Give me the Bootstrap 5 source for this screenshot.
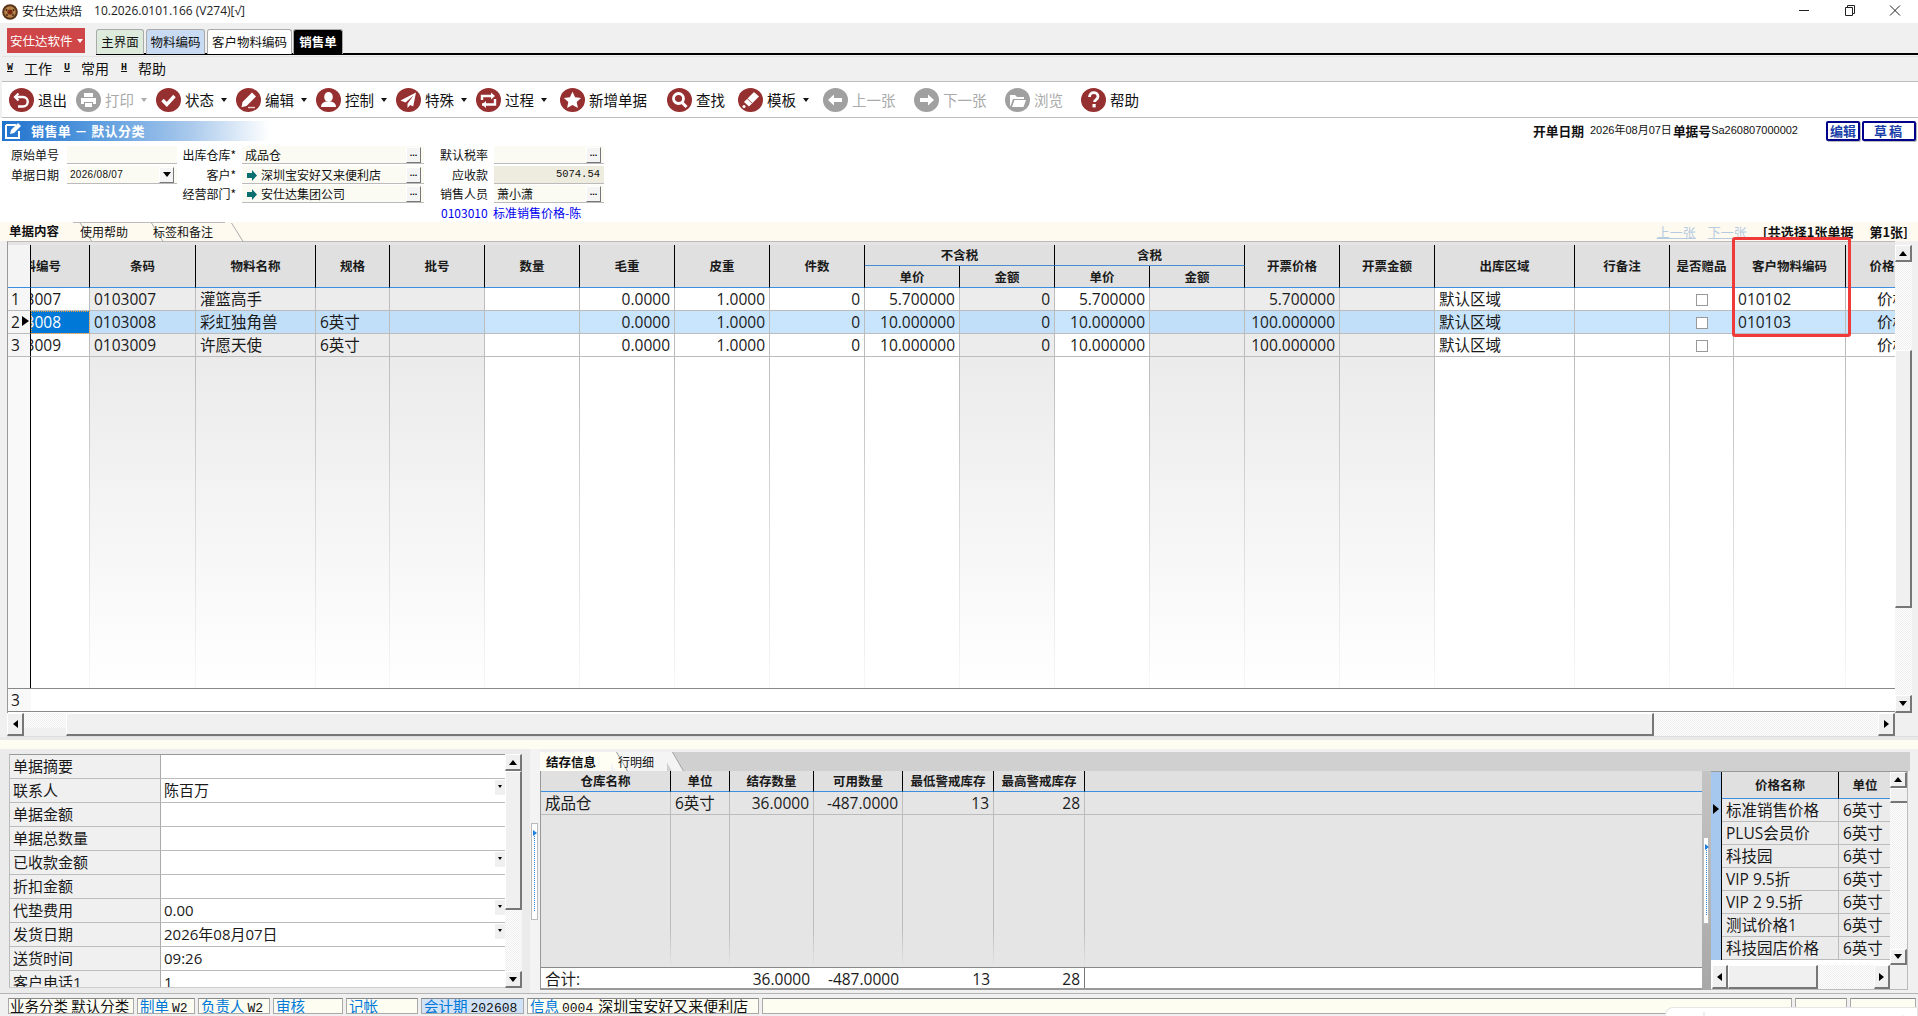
<!DOCTYPE html>
<html lang="zh-CN">
<head>
<meta charset="utf-8">
<title>安仕达烘焙</title>
<link href="https://cdn.jsdelivr.net/npm/bootstrap@5.3.0/dist/css/bootstrap.min.css" rel="stylesheet">
<style>
html,body{height:100%;overflow:hidden}
body{font-family:"Noto Sans CJK SC","Liberation Sans",sans-serif;font-size:12px;color:#111;background:#f0f0f0;line-height:1.2}
.app{position:relative;width:1918px;height:1016px;overflow:hidden}
.titlebar{height:23px;background:#fff;padding-left:2px}
.titlebar .ttl{margin-left:4px;font-size:12px}
.titlebar .ver{margin-left:12px;font-family:"Open Sans","Noto Sans CJK SC",sans-serif;font-size:12px;color:#222}
.winbtns{margin-left:auto}
.winpad{width:3px}
.tabbar{height:33px;background:#f0f0f0;padding:5px 0 0 7px}
.redbtn{width:78px;height:25px;background:#cf4648;color:#fff;font-size:12.5px;padding-left:3px}
.caret-s{width:0;height:0;border:3px solid transparent;border-top:4px solid currentColor;border-bottom:0;display:inline-block}
.doctabs{margin-left:11px;height:27px;border-bottom:2px solid #000;align-self:flex-start;flex:1;gap:2px;padding-top:1px}
.doctab{height:25px;border:1px solid #aaa;border-bottom:0;border-radius:3px 3px 0 0;font-size:12.5px;line-height:23px;text-align:center}
.dt1{width:48px;background:#dcebdc}.dt2{width:59px;background:#c8dbf2}.dt3{width:85px;background:#fff}
.dt4{width:50px;background:#000;color:#fff;font-weight:700;margin-left:-1px}
.menubar{height:26px;background:#f0f0f0;border-top:1px solid #e2e2e2;border-bottom:1px solid #bdbdbd;padding:0 0 2px 5px;font-size:14px;margin-left:2px}
.menubar u{font-family:"Liberation Mono",monospace;font-size:10px;font-weight:700;margin-right:11px;text-decoration:underline}
.menubar .mi{margin-right:12px}
.toolbar{height:36px;background:#fff;border-bottom:1px solid #bdbdbd;padding-left:7px;margin-left:2px}
.tbi{display:flex;align-items:center;flex:none;font-size:14.5px}
.tbi svg{flex:none;margin-right:4px;color:#962f2f}
.tbi.off{color:#aaa}.tbi.off svg{color:#a0a0a0}
.tbi .caret-s{margin-left:7px}
.tbi.off .caret-s{color:#aaa}
.w67{width:67px}.w80{width:80px}.w107{width:107px}.w71{width:71px}.w85{width:85px}.w91{width:91px}.w76{width:76px}
.capline{height:28px;background:#fff;padding:3px 2px 0 2px}
.cap{width:268px;height:20px;background:linear-gradient(90deg,#2273ce 0,#4e94dc 30%,#a9c9ec 70%,#fff 100%);color:#fff;font-weight:700;font-size:13px;padding-left:2px}
.cap span{margin-left:7px;letter-spacing:.4px}
.metainfo{margin-left:auto;font-size:12.75px;height:19px}
.metainfo b{font-weight:700}
.metainfo .mn{font-family:"Liberation Sans","Noto Sans CJK SC",sans-serif;font-size:11px;margin:0 1px 0 6px}
.stampbtn{height:20px;background:#fff;border:2px solid #00008b;border-radius:2px;color:#1a3fa8;font-weight:700;font-size:13px;text-align:center;line-height:16px;box-shadow:1px 1px 0 #bbb}
.sb1{width:34px;margin-left:28px}.sb2{width:54px;margin-left:2px;letter-spacing:2px}
.formarea{height:76px;background:#fff;padding-left:2px;display:grid;grid-template-columns:65px 110px 65px 182px 70px 110px;grid-auto-rows:19.5px;font-size:12px}
.formarea .lb{padding-left:9px;line-height:18px;white-space:nowrap}
.formarea .rt{text-align:right;padding:0 6px 0 0}
.fld{background:#fbfbf3;border-bottom:1px solid #bbb;height:18px;font-size:12px;line-height:17px;padding-left:3px;position:relative;white-space:nowrap}
.fld.mono{font-family:"Liberation Sans",sans-serif;font-size:10px;letter-spacing:.3px}
.fld.ro{background:#eeecdf;text-align:right;padding-right:4px;font-family:"Liberation Mono",monospace;font-size:10.5px}
.dotbtn{position:absolute;right:3px;top:1px;width:15px;height:16px;background:#f4f4f4;border:1px solid #fff;border-right-color:#777;border-bottom-color:#777;font:700 9px/10px "Liberation Sans",sans-serif;text-align:center;color:#000}
.tealarrow{color:#0a6f6f;margin:0 4px 0 2px;vertical-align:-1px}
.formlink{grid-column:5/7;padding-left:17px;color:#00e;font-size:12px;line-height:15px;white-space:nowrap}
.tabstrip{height:19px;background:#fffaf0;padding-left:7px;position:relative}
.wtab{position:relative;height:19px;line-height:18px;font-size:12px;padding:0 2px;flex:none}
.wtab::after{content:"";position:absolute;top:0;right:-7px;width:10px;height:19px;border-right:1px solid #aaa;transform:skewX(32deg);transform-origin:top}
.wtab.on{font-weight:700;font-size:12.5px}
.wt1{width:66px}.wt2{width:72px;padding-left:7px;border-top:1px solid #bbb}.wt3{width:80px;padding-left:8px;border-top:1px solid #bbb}
.pager{margin-left:auto;font-weight:700;font-size:13px;padding-right:10px}
.pager .pl{color:#b7cbe0;text-decoration:underline;margin-right:12px;font-weight:400}
.gridrow{height:472px}
.gridwrap{margin-left:7px;width:1888px;overflow:hidden;border-top:1px solid #bbb;border-left:1px solid #999;background:#fff;padding-top:3px;background-image:linear-gradient(#e4e4e4,#e4e4e4);background-repeat:no-repeat;background-size:100% 3px}
.gt.table{table-layout:fixed;border-collapse:separate;border-spacing:0;margin:0;font-family:"Open Sans","Noto Sans CJK SC",sans-serif;font-size:15.5px;color:#1a1a1a}
.tw-main{width:1936px}
.tw-stk{width:1161px}
.gt.table>:not(caption)>*>*{padding:1px 4px 0;height:23px;line-height:21px;border:0;border-right:1px solid #bcbcbc;border-bottom:1px solid #bcbcbc;background:#fff;box-shadow:none;white-space:nowrap;overflow:hidden;color:inherit;vertical-align:middle}
.gt.table>thead>tr>th{background:#e0e0e0;border-right:1px solid #000;border-bottom:1.5px solid #3c8fe0;font:700 12.5px/16px "Noto Sans CJK SC",sans-serif;text-align:center;height:21px;padding-top:0}
.gt.table>thead>tr.sub>th{height:22px}
.gt.table>thead>tr>th.grp{border-bottom:1px solid #4a8cd0}
.gt.table>thead>tr>th.rh{background:#f4f4f4}
.gt.table>tbody>tr>td.rh{background:#f6f6f6;border-right:1.5px solid #000;padding-left:3px;position:relative}
.gt.table>tbody>tr>td.g{background:#ececec}
.gt.table>tbody>tr>td.r{text-align:right}
.gt.table>tbody>tr>td.pc{padding-left:31px}
.gt.table>tbody>tr.sel>td{background:#c8e5fd}
.gt.table>tbody>tr.sel>td.g{background:#c1dff9}
.gt.table>tbody>tr.sel>td.rh{background:#f6f6f6}
.gt.table>tbody>tr.sel>td.cur{background:#0078d7;color:#fff;outline:1px dotted #e8a040;outline-offset:-1px}
.gt.table>tbody>tr.fill>td{height:331px;background:#fff;border-bottom:0;border-width:0 1px 0 0;border-style:solid;border-image:linear-gradient(#bcbcbc,#f8f8f8) 1}
.gt.table>tbody>tr.fill>td.g{background:linear-gradient(#ebebeb,#fff)}
.gt.table>tbody>tr.fill>td.rh{background:#f9f9f9;border-image:none;border-right:1.5px solid #000}
.gt.table>tbody>tr.foot>td{height:24px;border-top:1px solid #888;border-bottom:1px solid #888;border-right:0}
.gt.table>tbody>tr.foot>td.rh{background:#f9f9f9;border-right:0}
.clipcode{display:block;margin-left:-36px}
.clipcodeh{display:block;margin-left:-24px;text-align:left}
.ptr{position:absolute;right:1px;top:5px;border:5px solid transparent;border-left:7px solid #000;border-right:0}
.chk{display:block;width:12px;height:12px;border:1px solid #999;background:#fff;margin:0 auto}
.hatch{background:repeating-conic-gradient(#eee 0 25%,#fff 0 50%) 0 0/2px 2px}
.sbtn{flex:none;background:#f0f0f0;border:1px solid #fff;border-right:2px solid #777;border-bottom:2px solid #777;display:flex;align-items:center;justify-content:center}
.thumb{background:#f0f0f0;border:1px solid #fff;border-right:2px solid #777;border-bottom:2px solid #777}
.au,.ad,.al,.ar{width:0;height:0;border:4px solid transparent;display:block}
.au{border-bottom:5px solid #000;border-top:0}.ad{border-top:5px solid #000;border-bottom:0}
.al{border-right:5px solid #000;border-left:0}.ar{border-left:5px solid #000;border-right:0}
.vs{width:17px;flex:none}
.vs-main{padding-top:4px;background:#f0f0f0}
.btn-top{height:17px}.btn-bot{height:18px}
.main-h1{height:88px}.main-th{height:258px}
.hs-main{height:24px;margin-left:7px;border-bottom:1px solid #ddd}
.hbtn{width:17px}
.hs-main .h1{width:42px}.hs-main .th{width:1588px}
.corner{width:17px;background:#f0f0f0;flex:none}
.hs-end{width:6px}
.gap-cream{height:12px;background:#fdfdf2;border-top:3px solid #e9e9e9}
.bottom{height:244px;background:#f0f0f0}
.leftp{width:530px;flex:none;background:#ebebeb;padding:5px 0 0 9px}
.ptbl-wrap{width:496px;height:234px;overflow:hidden;background:#fff;border-top:1px solid #999;border-left:1px solid #bbb;border-bottom:1px solid #ccc}
.pt.table{table-layout:fixed;margin:0;font-family:"Open Sans","Noto Sans CJK SC",sans-serif;font-size:15px;border-collapse:separate;border-spacing:0;color:#1a1a1a}
.pt.table>:not(caption)>*>*{height:24px;padding:0 3px;line-height:22px;border:0;border-bottom:1px solid #bcbcbc;background:#fff;box-shadow:none;white-space:nowrap;overflow:hidden;position:relative;color:inherit}
.pt.table>tbody>tr>th{background:#f0f0f0;border-right:1px solid #aaa;font-weight:400}
.ddm{position:absolute;right:0;top:1px;width:10px;height:15px;background:#f0f0f0;display:flex;justify-content:center;padding-top:5px}
.ddm i{display:block;width:0;height:0;border:2.5px solid transparent;border-top:3px solid #000;border-bottom:0}
.vs-prop{height:234px}
.prop-btn{height:17px}.prop-th{height:139px}
.split{width:10px;flex:none;background:#f3f3f3;padding-left:1px}
.splitbtn{width:7px;height:97px;background:#fff;border:1px solid #bbb;position:relative}
.splitbtn::before{content:"";position:absolute;left:2px;top:8px;bottom:8px;border-left:1px dotted #2f86e0}
.splitbtn.t1::after{content:"";position:absolute;left:1px;top:6px;border:3px solid transparent;border-left:4px solid #1f80e0;border-right:0}
.rightp{width:1370px;padding-top:3px;flex:none}
.strip{height:19px;background:#d0d0d0;padding-left:0}
.stab{height:19px;flex:none;font-size:12px;line-height:19px;position:relative}
.stab.on{width:71px;background:#fffef5;font-weight:700;padding-left:6px;font-size:12.5px}
.stab.off{width:56px;background:#f4f4f4;padding-left:7px}
.stab.on::after,.stab.off::after{content:"";position:absolute;top:0;right:-6px;width:12px;height:19px;background:inherit;border-right:1px solid #999;transform:skewX(30deg);transform-origin:top;z-index:1}
.stab span{position:relative;z-index:2}
.rgrid{height:219px}
.stk{width:1162px;flex:none;overflow:hidden;background:#e5e5e5;border-left:1px solid #999;border-bottom:2px solid #999}
.st.table>:not(caption)>*>*{background:#e5e5e5;height:23px}
.st.table>thead>tr>th{height:21px;border-bottom:1.5px solid #3c8fe0}
.st.table>tbody>tr.sfill>td{height:152px;background:#e5e5e5;border-width:0 1px 0 0;border-style:solid;border-bottom:0;border-image:linear-gradient(#bcbcbc,#bcbcbc 75%,#e5e5e5) 1}
.st.table>tbody>tr.sfill>td.lastc,.st.table>tbody>tr.sdata>td.lastc,.st.table>thead>tr>th.lastc{border-right:0;border-image:none}
.st.table>tbody>tr.sfoot>td{background:#fff;height:22px;border-top:1px solid #888;border-bottom:0;border-right:0}
.st.table>tbody>tr.sfoot>td.bl{border-right:1px solid #777}
.gutter{width:9px;flex:none;background:linear-gradient(#c4c4c4,#a8a8a8);padding-left:1px}
.splitbtn.sm{height:87px;width:6px}
.prc{width:197px;flex:none;background:#fff;border-top:1px solid #999;border-right:1px solid #bbb;border-bottom:1px solid #bbb}
.prc-t{width:180px;height:193px;overflow:hidden;background:#fff}
.pr.table{width:180px}
.pr.table>:not(caption)>*>*{height:23px;background:#ebebeb}
.pr.table>thead>tr>th{height:27px;border-bottom:1.5px solid #3c8fe0}
.pr.table>thead>tr>th.ind,.pr.table>tbody>tr>td.ind{background:#a6c8ef;border-right:1px solid #000;border-bottom:0;position:relative;padding:0}
.pr.table>tbody>tr>td:last-child,.pr.table>thead>tr>th:last-child{border-right:0}
.ptr2{position:absolute;left:2px;top:5px;border:5px solid transparent;border-left:6px solid #000;border-right:0}
.pb{height:16px}.pt2{height:15px;border-right:0}
.prc-hs{height:24px;padding-left:1px}
.prc-hs .hbtn{width:16px}.prc-hs .th2{width:90px}
.statusbar{height:23px;background:#f0f0f0;border-top:1px solid #b5b5b5;padding:4px 0 0 8px;gap:3px;align-items:flex-start}
.stc{height:16px;flex:none;background:#fdfdf2;border:1px solid #aaa;border-top-color:#888;font-size:14.5px;line-height:13px;overflow:hidden;white-space:nowrap;padding:0 1px;color:#111}
.stc em{font-style:normal;color:#0078d7;margin-left:1px}
.stc tt{font-family:"Liberation Mono",monospace;font-size:13px;margin-left:3px}
.stc .shop{font-size:15px;margin-left:5px}
.stc.act{background:#cfe2f8}
.s1{width:126px}.s2{width:58px}.s3{width:72px}.s4{width:70px}.s5{width:72px}.s6{width:103px}.s7{width:232px}.s8{width:1030px}.s9{width:52px}.s10{width:66px}
.hilite{position:absolute;left:1732px;top:237px;width:119px;height:100px;border:3px solid #f03a3a;border-radius:3px;pointer-events:none}
.trayfly{position:absolute;right:0;bottom:0;width:253px;height:9px;background:#fff;border:1px solid #e5e5e5;border-bottom:0;border-radius:8px 0 0 0;overflow:hidden}
</style>
</head>
<body>
<svg width="0" height="0" class="d-none">
<symbol id="i-exit" viewBox="0 0 25 24"><ellipse cx="12.500" cy="12" rx="12.500" ry="12" fill="currentColor"/><path d="M9.500 5.500L6 9l3.500 3.500" fill="none" stroke="#fff" stroke-width="2.200"/><path d="M6.500 9H14a4.700 4.700 0 0 1 0 9.500H9" fill="none" stroke="#fff" stroke-width="2.400"/></symbol>
<symbol id="i-print" viewBox="0 0 25 24"><ellipse cx="12.500" cy="12" rx="12.500" ry="12" fill="currentColor"/><path d="M8 5h9v4H8zM5 10h15v6h-3v-2H8v2H5zM9 15h7v4H9z" fill="#fff"/></symbol>
<symbol id="i-check" viewBox="0 0 25 24"><ellipse cx="12.500" cy="12" rx="12.500" ry="12" fill="currentColor"/><path d="M6.500 12l4.300 4.500L18.500 8" fill="none" stroke="#fff" stroke-width="3.400"/></symbol>
<symbol id="i-edit" viewBox="0 0 25 24"><ellipse cx="12.500" cy="12" rx="12.500" ry="12" fill="currentColor"/><path d="M16 4.500l4 4L10.500 18l-5 1.200L6.500 14z" fill="#fff"/><path d="M12 19.500h7" stroke="#f0d0d0" stroke-width="1.400"/></symbol>
<symbol id="i-user" viewBox="0 0 25 24"><ellipse cx="12.500" cy="12" rx="12.500" ry="12" fill="currentColor"/><ellipse cx="12.500" cy="9" rx="4.300" ry="5" fill="#fff"/><path d="M5 19c0-4 3-5 5-5.500h5c2 .5 5 1.500 5 5.500z" fill="#fff"/></symbol>
<symbol id="i-plane" viewBox="0 0 25 24"><ellipse cx="12.500" cy="12" rx="12.500" ry="12" fill="currentColor"/><path d="M20 4.500L4.500 12.500l5 2 8-7-6 8.200V20l2.700-3 3 1.500z" fill="#fff"/></symbol>
<symbol id="i-loop" viewBox="0 0 25 24"><ellipse cx="12.500" cy="12" rx="12.500" ry="12" fill="currentColor"/><path d="M6 12V8h10M6 16.500h13V11" fill="none" stroke="#fff" stroke-width="2.400"/><path d="M15 4.500l4 3.500-4 3.500zM10 13l-4 3.500 4 3.500z" fill="#fff"/></symbol>
<symbol id="i-star" viewBox="0 0 25 24"><ellipse cx="12.500" cy="12" rx="12.500" ry="12" fill="currentColor"/><path d="M12.500 3.800l2.600 5.500 6 .7-4.400 4.100 1.200 6-5.400-3-5.400 3 1.200-6L3.900 10l6-.7z" fill="#fff"/></symbol>
<symbol id="i-search" viewBox="0 0 25 24"><ellipse cx="12.500" cy="12" rx="12.500" ry="12" fill="currentColor"/><circle cx="11.500" cy="10.500" r="5" fill="none" stroke="#fff" stroke-width="2.800"/><path d="M15 14.500l4.500 4.500" stroke="#fff" stroke-width="3"/></symbol>
<symbol id="i-tpl" viewBox="0 0 25 24"><ellipse cx="12.500" cy="12" rx="12.500" ry="12" fill="currentColor"/><path d="M16 4l5 4.500-10 10-5-4.500z" fill="#fff"/><path d="M9 10.500l5 4.500" stroke="#962f2f" stroke-width=".8"/><circle cx="6" cy="18.500" r="1.600" fill="#fff"/></symbol>
<symbol id="i-left" viewBox="0 0 25 24"><ellipse cx="12.500" cy="12" rx="12.500" ry="12" fill="currentColor"/><path d="M5 12l6-5.500V10h8v4h-8v3.500z" fill="#fff"/></symbol>
<symbol id="i-right" viewBox="0 0 25 24"><ellipse cx="12.500" cy="12" rx="12.500" ry="12" fill="currentColor"/><path d="M20 12l-6-5.500V10H6v4h8v3.500z" fill="#fff"/></symbol>
<symbol id="i-folder" viewBox="0 0 25 24"><ellipse cx="12.500" cy="12" rx="12.500" ry="12" fill="currentColor"/><path d="M5 18V7h5l2 2h7v2H8l-2.500 7zM7 19l2.500-7H21l-2.500 7z" fill="#fff"/></symbol>
<symbol id="i-help" viewBox="0 0 25 24"><ellipse cx="12.500" cy="12" rx="12.500" ry="12" fill="currentColor"/><path d="M8.500 9c0-6 8.500-5.500 8.500-.5 0 3-3.500 3-3.500 5.500" fill="none" stroke="#fff" stroke-width="2.800"/><rect x="11.500" y="16" width="3.200" height="3.400" fill="#fff"/></symbol>
</svg>

<div class="app d-flex flex-column">

  <div class="titlebar d-flex align-items-center">
    <svg width="16" height="16" viewBox="0 0 16 16"><circle cx="8" cy="8" r="7.800" fill="#5a3418"/><circle cx="8" cy="8" r="5.800" fill="#b5824a"/><circle cx="8" cy="8" r="2.600" fill="#7a2a10"/><circle cx="4.500" cy="6" r=".9" fill="#3d2010"/><circle cx="11.500" cy="6" r=".9" fill="#3d2010"/><circle cx="5" cy="11" r=".9" fill="#3d2010"/><circle cx="11" cy="11" r=".9" fill="#3d2010"/></svg>
    <span class="ttl">安仕达烘焙</span><span class="ver">10.2026.0101.166 (V274)[√]</span>
    <svg class="winbtns" width="116" height="23" viewBox="0 0 116 23"><path d="M0 10.500h10" stroke="#222"/><path d="M46.500 7.500h7v8h-7zM48.500 7.500V5.500h7v8h-2" fill="none" stroke="#222"/><path d="M91 5.500l10 10M101 5.500l-10 10" stroke="#222"/></svg>
    <span class="winpad"></span>
  </div>

  <div class="tabbar d-flex">
    <div class="redbtn d-flex align-items-center">安仕达软件<span class="caret-s ms-1"></span></div>
    <div class="doctabs d-flex">
      <div class="doctab dt1">主界面</div><div class="doctab dt2">物料编码</div><div class="doctab dt3">客户物料编码</div><div class="doctab dt4">销售单</div>
    </div>
  </div>

  <div class="menubar d-flex align-items-center">
    <u>W</u><span class="mi">工作</span><u>U</u><span class="mi">常用</span><u>H</u><span>帮助</span>
  </div>

  <div class="toolbar d-flex align-items-center">
    <div class="tbi w67"><svg width="25" height="24"><use href="#i-exit"/></svg>退出</div>
    <div class="tbi off w80"><svg width="25" height="24"><use href="#i-print"/></svg>打印<span class="caret-s"></span></div>
    <div class="tbi w80"><svg width="25" height="24"><use href="#i-check"/></svg>状态<span class="caret-s"></span></div>
    <div class="tbi w80"><svg width="25" height="24"><use href="#i-edit"/></svg>编辑<span class="caret-s"></span></div>
    <div class="tbi w80"><svg width="25" height="24"><use href="#i-user"/></svg>控制<span class="caret-s"></span></div>
    <div class="tbi w80"><svg width="25" height="24"><use href="#i-plane"/></svg>特殊<span class="caret-s"></span></div>
    <div class="tbi w80 me-0"><svg width="25" height="24"><use href="#i-loop"/></svg>过程<span class="caret-s"></span></div>
    <div class="tbi w107 ms-1"><svg width="25" height="24"><use href="#i-star"/></svg>新增单据</div>
    <div class="tbi w71"><svg width="25" height="24"><use href="#i-search"/></svg>查找</div>
    <div class="tbi w85"><svg width="25" height="24"><use href="#i-tpl"/></svg>模板<span class="caret-s"></span></div>
    <div class="tbi off w91"><svg width="25" height="24"><use href="#i-left"/></svg>上一张</div>
    <div class="tbi off w91"><svg width="25" height="24"><use href="#i-right"/></svg>下一张</div>
    <div class="tbi off w76"><svg width="25" height="24"><use href="#i-folder"/></svg>浏览</div>
    <div class="tbi w76"><svg width="25" height="24"><use href="#i-help"/></svg>帮助</div>
  </div>

  <div class="capline d-flex">
    <div class="cap d-flex align-items-center">
      <svg width="20" height="18" viewBox="0 0 20 18"><path d="M2 3h10M2 3v13h13V9" fill="none" stroke="#fff" stroke-width="2"/><path d="M14 1l3 3-7 7-4 1 1-4z" fill="#fff"/></svg>
      <span>销售单 － 默认分类</span>
    </div>
    <div class="metainfo d-flex align-items-center">
      <b>开单日期</b><span class="mn">2026年08月07日</span><b>单据号</b><span class="mn m-0">Sa260807000002</span>
      <div class="stampbtn sb1">编辑</div><div class="stampbtn sb2">草稿</div>
    </div>
  </div>

  <div class="formarea">
    <div class="lb">原始单号</div><div class="fld"></div>
    <div class="lb rt">出库仓库*</div><div class="fld">成品仓<span class="dotbtn">...</span></div>
    <div class="lb rt">默认税率</div><div class="fld"><span class="dotbtn">...</span></div>

    <div class="lb">单据日期</div><div class="fld mono">2026/08/07<span class="dotbtn d-flex align-items-center justify-content-center"><i class="ad"></i></span></div>
    <div class="lb rt">客户*</div><div class="fld"><svg class="tealarrow" width="10" height="11" viewBox="0 0 10 11"><path d="M0 3h5V0l5 5.500-5 5.500V8H0z" fill="currentColor"/></svg>深圳宝安好又来便利店<span class="dotbtn">...</span></div>
    <div class="lb rt">应收款</div><div class="fld ro">5074.54</div>

    <div></div><div></div>
    <div class="lb rt">经营部门*</div><div class="fld"><svg class="tealarrow" width="10" height="11" viewBox="0 0 10 11"><path d="M0 3h5V0l5 5.500-5 5.500V8H0z" fill="currentColor"/></svg>安仕达集团公司<span class="dotbtn">...</span></div>
    <div class="lb rt">销售人员</div><div class="fld">萧小潇<span class="dotbtn">...</span></div>

    <div></div><div></div><div></div><div></div>
    <div class="formlink">0103010&nbsp; 标准销售价格-陈</div>
  </div>

  <div class="tabstrip d-flex">
    <div class="wtab wt1 on">单据内容</div>
    <div class="wtab wt2">使用帮助</div>
    <div class="wtab wt3">标签和备注</div>
    <div class="pager d-flex align-items-center"><span class="pl">上一张</span><span class="pl me-3">下一张</span><span class="me-3">[共选择1张单据</span><span>第1张]</span></div>
  </div>

  <div class="gridrow d-flex">
    <div class="gridwrap">
      <table class="table gt tw-main">
        <colgroup><col style="width:23px"><col style="width:59px"><col style="width:106px"><col style="width:120px"><col style="width:74px"><col style="width:95px"><col style="width:95px"><col style="width:95px"><col style="width:95px"><col style="width:95px"><col style="width:95px"><col style="width:95px"><col style="width:95px"><col style="width:95px"><col style="width:95px"><col style="width:95px"><col style="width:140px"><col style="width:95px"><col style="width:64px"><col style="width:112px"><col style="width:98px"></colgroup>
        <thead>
          <tr>
            <th rowspan="2" class="rh"></th><th rowspan="2"><span class="clipcodeh">物料编号</span></th><th rowspan="2">条码</th><th rowspan="2">物料名称</th><th rowspan="2">规格</th><th rowspan="2">批号</th><th rowspan="2">数量</th><th rowspan="2">毛重</th><th rowspan="2">皮重</th><th rowspan="2">件数</th>
            <th colspan="2" class="grp">不含税</th><th colspan="2" class="grp">含税</th>
            <th rowspan="2">开票价格</th><th rowspan="2">开票金额</th><th rowspan="2">出库区域</th><th rowspan="2">行备注</th><th rowspan="2">是否赠品</th><th rowspan="2">客户物料编码</th><th rowspan="2">价格类型</th>
          </tr>
          <tr class="sub"><th>单价</th><th>金额</th><th>单价</th><th>金额</th></tr>
        </thead>
        <tbody>
          <tr><td class="rh">1</td><td><span class="clipcode">0103007</span></td><td class="g">0103007</td><td class="g">灌篮高手</td><td class="g"></td><td class="g"></td><td></td><td class="r">0.0000</td><td class="r">1.0000</td><td class="r">0</td><td class="r">5.700000</td><td class="g r">0</td><td class="r">5.700000</td><td class="g"></td><td class="g r">5.700000</td><td class="g"></td><td>默认区域</td><td></td><td><span class="chk"></span></td><td>010102</td><td class="pc">价格</td></tr>
          <tr class="sel"><td class="rh">2<i class="ptr"></i></td><td class="cur"><span class="clipcode">0103008</span></td><td class="g">0103008</td><td class="g">彩虹独角兽</td><td class="g">6英寸</td><td class="g"></td><td></td><td class="r">0.0000</td><td class="r">1.0000</td><td class="r">0</td><td class="r">10.000000</td><td class="g r">0</td><td class="r">10.000000</td><td class="g"></td><td class="g r">100.000000</td><td class="g"></td><td>默认区域</td><td></td><td><span class="chk"></span></td><td>010103</td><td class="pc">价格</td></tr>
          <tr><td class="rh">3</td><td><span class="clipcode">0103009</span></td><td class="g">0103009</td><td class="g">许愿天使</td><td class="g">6英寸</td><td class="g"></td><td></td><td class="r">0.0000</td><td class="r">1.0000</td><td class="r">0</td><td class="r">10.000000</td><td class="g r">0</td><td class="r">10.000000</td><td class="g"></td><td class="g r">100.000000</td><td class="g"></td><td>默认区域</td><td></td><td><span class="chk"></span></td><td></td><td class="pc">价格</td></tr>
          <tr class="fill"><td class="rh"></td><td></td><td class="g"></td><td class="g"></td><td class="g"></td><td class="g"></td><td></td><td></td><td></td><td></td><td></td><td class="g"></td><td></td><td class="g"></td><td class="g"></td><td class="g"></td><td></td><td></td><td></td><td></td><td></td></tr>
          <tr class="foot"><td class="rh">3</td><td colspan="20"></td></tr>
        </tbody>
      </table>
    </div>
    <div class="vs vs-main d-flex flex-column">
      <div class="sbtn btn-top"><i class="au"></i></div>
      <div class="hatch main-h1"></div>
      <div class="thumb main-th"></div>
      <div class="hatch flex-grow-1"></div>
      <div class="sbtn btn-bot"><i class="ad"></i></div>
    </div>
    <div class="flex-grow-1"></div>
  </div>

  <div class="hs-main d-flex">
    <div class="sbtn hbtn"><i class="al"></i></div>
    <div class="hatch h1"></div>
    <div class="thumb th"></div>
    <div class="hatch flex-grow-1"></div>
    <div class="sbtn hbtn"><i class="ar"></i></div>
    <div class="corner"></div>
    <div class="hs-end"></div>
  </div>

  <div class="gap-cream"></div>

  <div class="bottom d-flex">
    <div class="leftp d-flex">
      <div class="ptbl-wrap">
        <table class="table pt">
          <colgroup><col style="width:151px"><col></colgroup>
          <tbody>
            <tr><th>单据摘要</th><td></td></tr>
            <tr><th>联系人</th><td>陈百万<span class="ddm"><i></i></span></td></tr>
            <tr><th>单据金额</th><td></td></tr>
            <tr><th>单据总数量</th><td></td></tr>
            <tr><th>已收款金额</th><td><span class="ddm"><i></i></span></td></tr>
            <tr><th>折扣金额</th><td></td></tr>
            <tr><th>代垫费用</th><td>0.00<span class="ddm"><i></i></span></td></tr>
            <tr><th>发货日期</th><td>2026年08月07日<span class="ddm"><i></i></span></td></tr>
            <tr><th>送货时间</th><td>09:26</td></tr>
            <tr><th>客户电话1</th><td>1</td></tr>
          </tbody>
        </table>
      </div>
      <div class="vs vs-prop d-flex flex-column">
        <div class="sbtn prop-btn"><i class="au"></i></div>
        <div class="thumb prop-th"></div>
        <div class="hatch flex-grow-1"></div>
        <div class="sbtn prop-btn"><i class="ad"></i></div>
      </div>
    </div>

    <div class="split d-flex align-items-center"><div class="splitbtn t1"></div></div>

    <div class="rightp">
      <div class="strip d-flex">
        <div class="stab on"><span>结存信息</span></div>
        <div class="stab off"><span>行明细</span></div>
      </div>
      <div class="rgrid d-flex">
        <div class="stk">
          <table class="table gt st tw-stk">
            <colgroup><col style="width:130px"><col style="width:59px"><col style="width:84px"><col style="width:89px"><col style="width:91px"><col style="width:91px"><col></colgroup>
            <thead><tr><th>仓库名称</th><th>单位</th><th>结存数量</th><th>可用数量</th><th>最低警戒库存</th><th>最高警戒库存</th><th class="lastc"></th></tr></thead>
            <tbody>
              <tr class="sdata"><td>成品仓</td><td>6英寸</td><td class="r">36.0000</td><td class="r">-487.0000</td><td class="r">13</td><td class="r">28</td><td class="lastc"></td></tr>
              <tr class="sfill"><td></td><td></td><td></td><td></td><td></td><td></td><td class="lastc"></td></tr>
              <tr class="sfoot"><td>合计:</td><td></td><td class="r">36.0000</td><td class="r">-487.0000</td><td class="r">13</td><td class="r bl">28</td><td></td></tr>
            </tbody>
          </table>
        </div>
        <div class="gutter d-flex align-items-center"><div class="splitbtn sm t1"></div></div>
        <div class="prc d-flex flex-column">
          <div class="d-flex">
            <div class="prc-t">
              <table class="table gt pr">
                <colgroup><col style="width:11px"><col style="width:117px"><col style="width:52px"></colgroup>
                <thead><tr><th class="ind"></th><th>价格名称</th><th>单位</th></tr></thead>
                <tbody>
                  <tr><td class="ind"><i class="ptr2"></i></td><td>标准销售价格</td><td>6英寸</td></tr>
                  <tr><td class="ind"></td><td>PLUS会员价</td><td>6英寸</td></tr>
                  <tr><td class="ind"></td><td>科技园</td><td>6英寸</td></tr>
                  <tr><td class="ind"></td><td>VIP 9.5折</td><td>6英寸</td></tr>
                  <tr><td class="ind"></td><td>VIP 2 9.5折</td><td>6英寸</td></tr>
                  <tr><td class="ind"></td><td>测试价格1</td><td>6英寸</td></tr>
                  <tr><td class="ind"></td><td>科技园店价格</td><td>6英寸</td></tr>
                </tbody>
              </table>
            </div>
            <div class="vs d-flex flex-column">
              <div class="sbtn pb"><i class="au"></i></div>
              <div class="thumb pt2"></div>
              <div class="hatch flex-grow-1"></div>
              <div class="sbtn pb"><i class="ad"></i></div>
            </div>
          </div>
          <div class="prc-hs d-flex">
            <div class="sbtn hbtn"><i class="al"></i></div>
            <div class="thumb th2"></div>
            <div class="hatch flex-grow-1"></div>
            <div class="sbtn hbtn"><i class="ar"></i></div>
            <div class="corner"></div>
          </div>
        </div>
      </div>
    </div>
  </div>

  <div class="statusbar d-flex">
    <div class="stc s1">业务分类 默认分类</div>
    <div class="stc s2"><em>制单</em><tt>W2</tt></div>
    <div class="stc s3"><em>负责人</em><tt>W2</tt></div>
    <div class="stc s4"><em>审核</em></div>
    <div class="stc s5"><em>记帐</em></div>
    <div class="stc s6 act"><em>会计期</em><tt>202608</tt></div>
    <div class="stc s7"><em>信息</em><tt>0004</tt><span class="shop">深圳宝安好又来便利店</span></div>
    <div class="stc s8"></div>
    <div class="stc s9"></div>
    <div class="stc s10"></div>
  </div>

  <div class="hilite"></div>
  <div class="trayfly">
    <svg width="253" height="9" viewBox="0 0 253 9"><rect x="13" y="6" width="12" height="3" rx="1" fill="#f07a1e"/><path d="M38 0v9" stroke="#ddd"/><rect x="52" y="7" width="3" height="2" fill="#333"/><rect x="79" y="7" width="3" height="2" fill="#333"/><circle cx="110" cy="8" r="2.500" fill="#444"/><rect x="138" y="7" width="12" height="2" fill="#222"/><rect x="168" y="7" width="9" height="2" fill="#e8603c"/><rect x="200" y="6" width="9" height="3" fill="#444"/><circle cx="237" cy="10" r="6" fill="none" stroke="#dfe5ef"/></svg>
  </div>
</div>
<script src="https://cdn.jsdelivr.net/npm/bootstrap@5.3.0/dist/js/bootstrap.bundle.min.js"></script>
</body>
</html>
